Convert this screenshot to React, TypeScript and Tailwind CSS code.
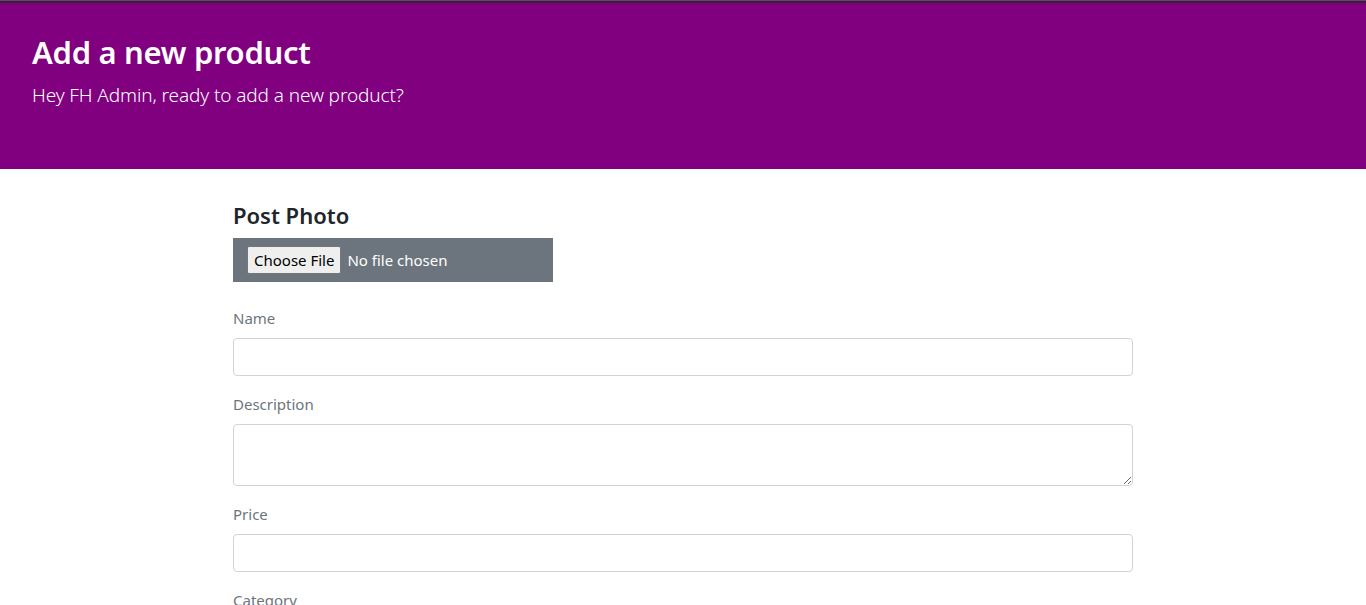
import React from "react";

export default function App() {
  const font = { fontFamily: '"Noto Sans", "Open Sans", "Liberation Sans", sans-serif' };
  return (
    <div className="min-h-[605px] bg-white" style={font}>
      <header className="h-[169px] bg-[linear-gradient(to_bottom,#555_0px,#555_1px,#3a103a_1px,#6a0a6a_3px,#800080_6px)] px-8 pt-[33px] text-white">
        <h1 className="text-[31px] leading-[38px] font-semibold tracking-[-0.3px]">Add a new product</h1>
        <p className="mt-[11px] text-[19px] leading-[26px] font-light tracking-[-0.1px]">Hey FH Admin, ready to add a new product?</p>
      </header>
      <main className="w-[900px] mx-auto pt-[32px]">
        <h4 className="text-[22px] leading-[29px] font-semibold text-[#212529] mb-2">Post Photo</h4>
        <div className="w-[320px] h-[44px] bg-[#6c757d] flex items-center pl-[14px]">
          <span className="h-[28px] px-[6px] bg-[#efefef] border border-[#767676] rounded-[2px] text-[15px] leading-[26px] text-black">Choose File</span>
          <span className="ml-[6px] text-[15px] text-white">No file chosen</span>
        </div>
        <div className="mt-6 flex flex-col">
          <label className="text-[15px] leading-6 text-[#6c757d] mb-2">Name</label>
          <input className="h-[38px] border border-[#ced4da] rounded-[4px] mb-4" />
          <label className="text-[15px] leading-6 text-[#6c757d] mb-2">Description</label>
          <textarea rows={2} className="h-[62px] border border-[#ced4da] rounded-[4px] mb-4 resize-y" />
          <label className="text-[15px] leading-6 text-[#6c757d] mb-2">Price</label>
          <input className="h-[38px] border border-[#ced4da] rounded-[4px] mb-4" />
          <label className="text-[15px] leading-6 text-[#6c757d] mb-2">Category</label>
          <select className="h-[38px] border border-[#ced4da] rounded-[4px] mb-4" />
        </div>
      </main>
    </div>
  );
}
